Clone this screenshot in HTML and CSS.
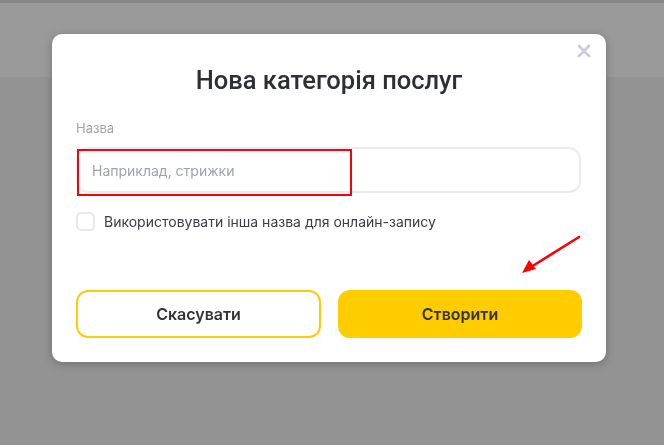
FILE: index.html
```html
<!DOCTYPE html>
<html lang="uk">
<head>
    <meta charset="UTF-8">
    <title>Нова категорія послуг</title>
    <link rel="stylesheet" href="styles.css">
</head>
<body>
    <div class="page-header"></div>

    <!-- modal: new service category -->
    <div class="overlay">
        <div class="modal">
            <button class="modal-close" aria-label="close">
                <svg width="14" height="14" viewBox="0 0 14 14">
                    <path d="M2 2L12 12M12 2L2 12" stroke="#c8ccd4" stroke-width="2.6" stroke-linecap="round"/>
                </svg>
            </button>
            <h2 class="modal-title">Нова категорія послуг</h2>

            <label class="field-label" for="cat_name">Назва</label>
            <div class="field-wrap">
                <input class="field-input" id="cat_name" type="text" placeholder="Наприклад, стрижки">
                <span class="mark-box"></span>
            </div>

            <label class="check-row">
                <span class="check-box"></span>
                <span class="check-text">Використовувати інша назва для онлайн-запису</span>
            </label>

            <div class="modal-actions">
                <button class="btn btn-outline">Скасувати</button>
                <button class="btn btn-primary">Створити</button>
            </div>

            <svg class="mark-arrow" width="64" height="42" viewBox="0 0 64 42">
                <path d="M60 3L12 33" stroke="#f00" stroke-width="2.6" stroke-linecap="round"/>
                <path d="M3 39L10 26L17 35Z" fill="#f00"/>
            </svg>
        </div>
    </div>
</body>
</html>
```

FILE: styles.css
```css
* {
    box-sizing: border-box;
}

body {
    margin: 0;
    background-color: #939393;
    font-family: Inter, "Noto Sans", sans-serif;
    height: 445px;
    overflow: hidden;
}

.page-header {
    height: 77px;
    background-color: #9a9a9a;
    border-top: 3px solid #868686;
}

/* overlay + modal */
.overlay {
    position: fixed;
    inset: 0;
    display: flex;
    align-items: flex-start;
    padding: 34px 0 0 52px;
}

.modal {
    position: relative;
    width: 554px;
    background: #fff;
    border-radius: 10px;
    padding: 30px 24px 24px 24px;
    box-shadow: 0 2px 8px rgba(0, 0, 0, 0.25);
}

.modal-close {
    position: absolute;
    top: 10px;
    right: 15px;
    border: none;
    background: none;
    padding: 0;
    width: 14px;
    height: 14px;
}

.modal-title {
    margin: 0 0 24px 0;
    text-align: center;
    font-family: Roboto, "Noto Sans", sans-serif;
    font-weight: 500;
    font-size: 25.5px;
    line-height: 32px;
    color: #2c2f33;
}

.field-label {
    display: block;
    font-size: 13px;
    line-height: 16px;
    color: #a0a5ad;
    margin-bottom: 11px;
}

.field-wrap {
    position: relative;
    width: 505px;
}

.field-input {
    display: block;
    width: 100%;
    height: 46px;
    border: 2px solid #e8ebf4;
    border-radius: 12px;
    padding: 0 14px;
    font-family: Inter, "Noto Sans", sans-serif;
    font-size: 14px;
    outline: none;
}

.field-input::placeholder {
    color: #9ea3ab;
}

/* red annotation over the input */
.mark-box {
    position: absolute;
    left: 1px;
    top: 2px;
    width: 275px;
    height: 47px;
    border: 2px solid #f00;
}

.check-row {
    display: flex;
    align-items: center;
    gap: 9px;
    margin-top: 19px;
}

.check-box {
    width: 19px;
    height: 19px;
    border: 2px solid #e6e8f0;
    border-radius: 5px;
}

.check-text {
    font-size: 14px;
    color: #3a3d42;
}

.modal-actions {
    display: grid;
    grid-template-columns: 245px 244px;
    gap: 17px;
    margin-top: 59px;
}

.btn {
    height: 48px;
    border-radius: 12px;
    font-family: Inter, "Noto Sans", sans-serif;
    font-size: 16px;
    font-weight: 600;
    color: #333;
}

.btn-outline {
    background: #fff;
    border: 2px solid #fccb0a;
}

.btn-primary {
    background: #ffcc00;
    border: none;
}

.mark-arrow {
    position: absolute;
    left: 467px;
    top: 200px;
}
```
